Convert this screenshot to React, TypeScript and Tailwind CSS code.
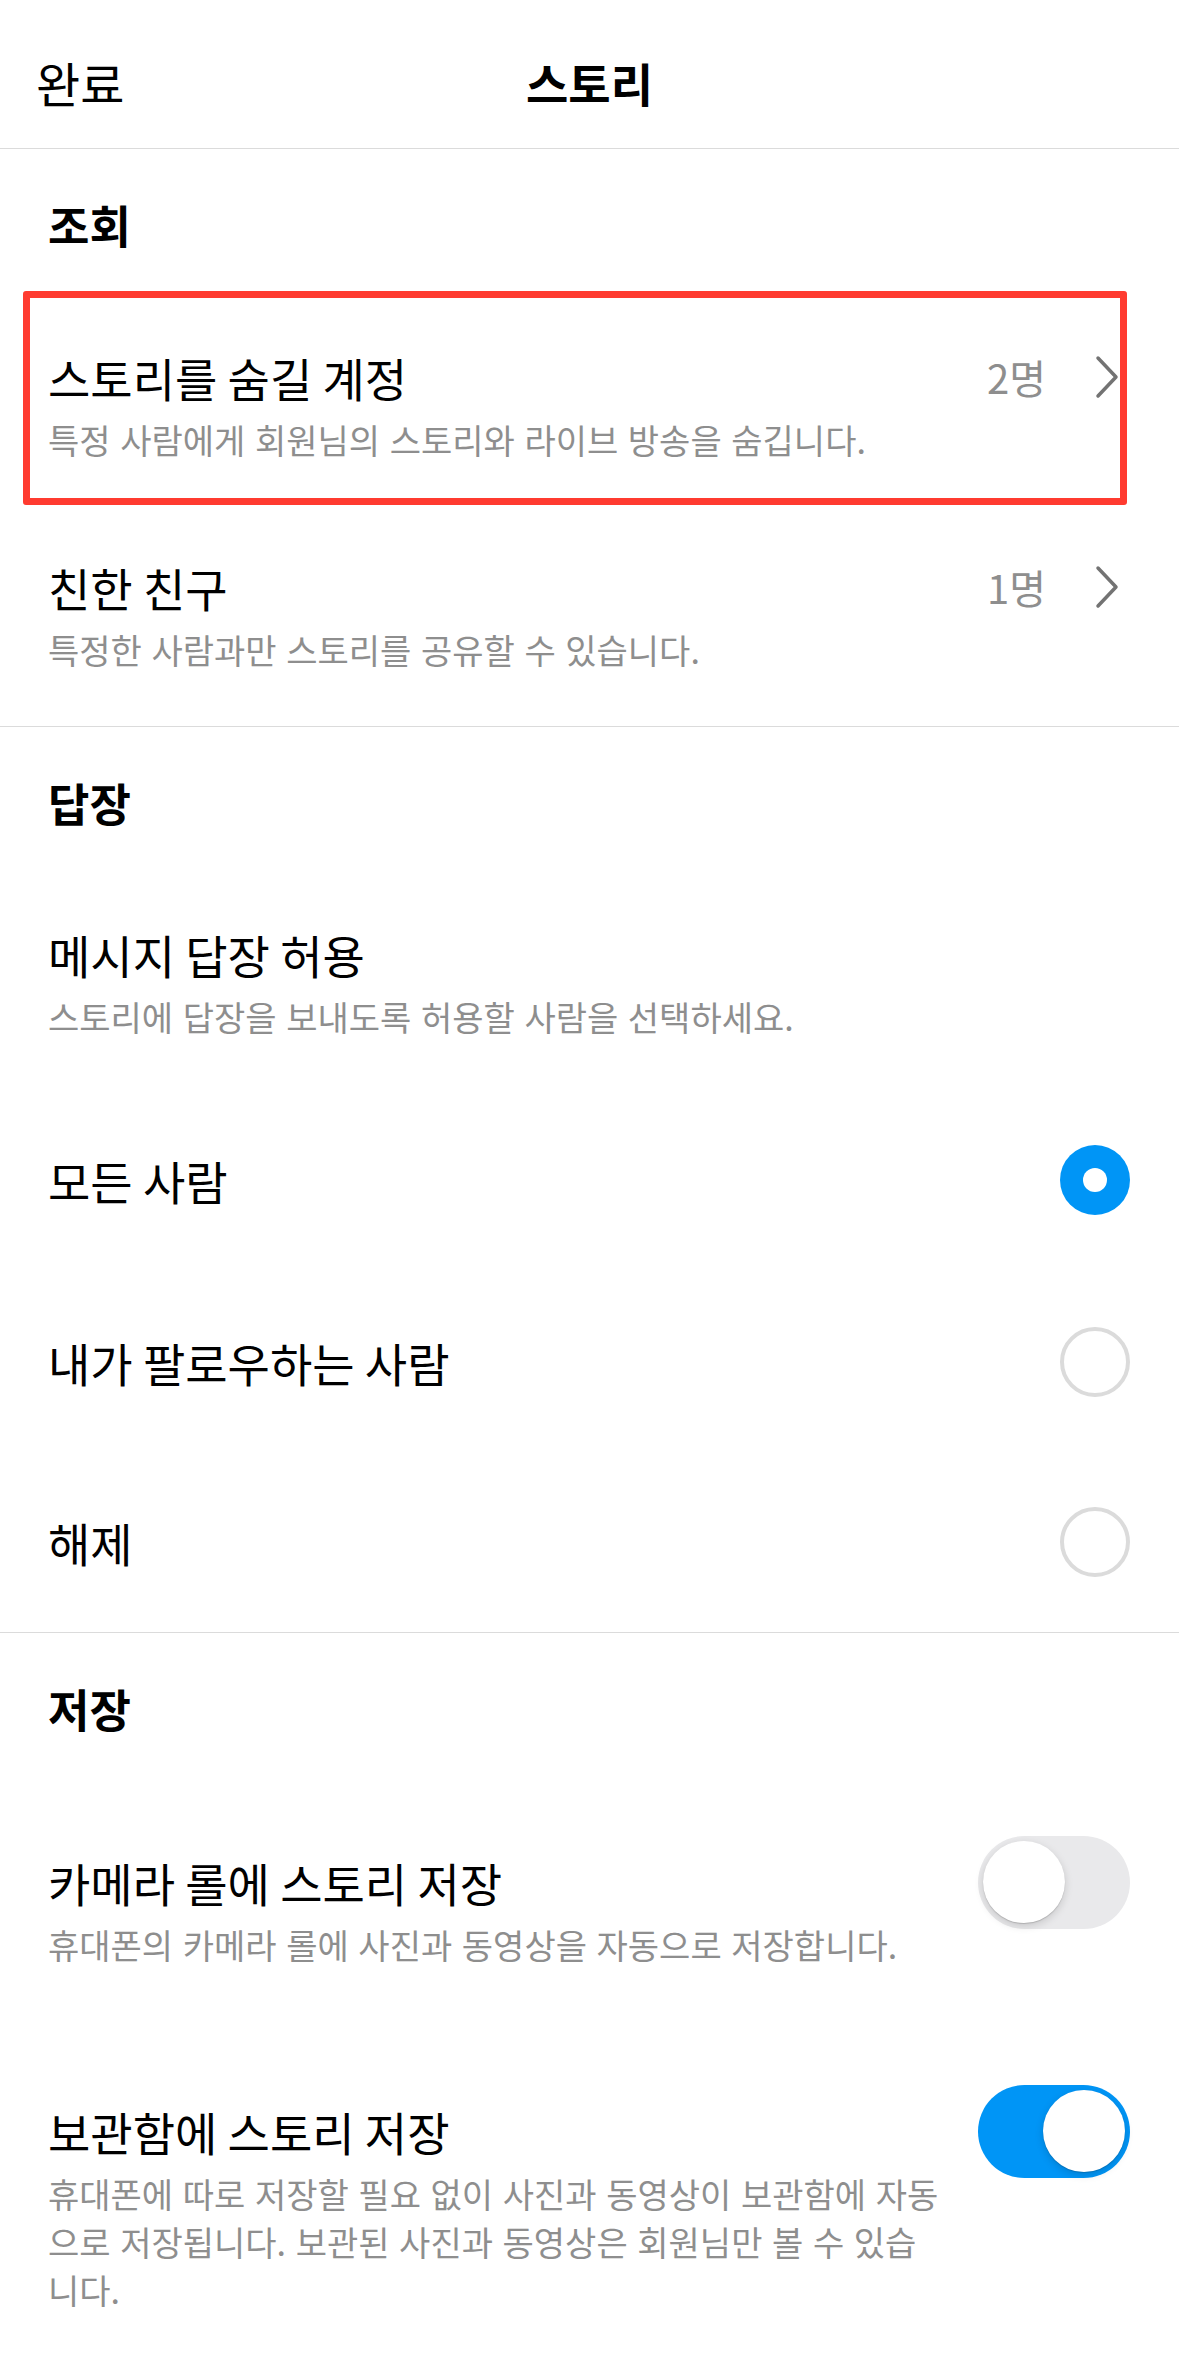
import React from "react";

const font = "font-['Noto_Sans_CJK_KR','Noto_Sans',sans-serif]";

function Chevron() {
  return (
    <svg width="26" height="44" viewBox="0 0 26 44" fill="none" className="shrink-0">
      <path d="M4 3 L22 22 L4 41" stroke="#737373" strokeWidth="3.5" strokeLinecap="round" strokeLinejoin="round" />
    </svg>
  );
}

function Radio({ checked }: { checked?: boolean }) {
  if (checked) {
    return (
      <div className="w-[70px] h-[70px] rounded-full bg-[#0095f6] flex items-center justify-center shrink-0">
        <div className="w-[24px] h-[24px] rounded-full bg-white" />
      </div>
    );
  }
  return <div className="w-[70px] h-[70px] rounded-full border-[4px] border-[#dbdbdb] shrink-0" />;
}

function Toggle({ on }: { on?: boolean }) {
  return (
    <div
      className={
        on
          ? "w-[152px] h-[93px] rounded-full bg-[#0095f6] flex items-center justify-end pr-[5px] shrink-0"
          : "w-[152px] h-[93px] rounded-full bg-[#e9e9eb] flex items-center justify-start pl-[5px] shrink-0"
      }
    >
      <div className="w-[82px] h-[82px] rounded-full bg-white shadow-[0_3px_8px_rgba(0,0,0,0.15),0_1px_1px_rgba(0,0,0,0.16)]" />
    </div>
  );
}

function SectionHeader({ label, border }: { label: string; border?: boolean }) {
  return (
    <div className={(border ? "border-t border-[#dbdbdb] " : "") + "h-[152px] flex items-center px-[48px]"}>
      <span className="text-[45px] font-bold text-black leading-[56px]">{label}</span>
    </div>
  );
}

function LinkRow({ title, desc, count }: { title: string; desc: string; count: string }) {
  return (
    <div className="h-[210px] flex flex-col justify-center pl-[48px] pr-[59px]">
      <div className="flex items-center justify-between h-[56px]">
        <span className="text-[46px] text-black leading-[56px] whitespace-nowrap">{title}</span>
        <div className="flex items-center gap-[48px]">
          <span className="text-[40px] text-[#8e8e8e] leading-[56px]">{count}</span>
          <Chevron />
        </div>
      </div>
      <div className="mt-[11px] text-[34px] leading-[48px] text-[#8e8e8e] whitespace-nowrap [word-spacing:2px]">{desc}</div>
    </div>
  );
}

function RadioRow({ label, checked, h }: { label: string; checked?: boolean; h: string }) {
  return (
    <div className={h + " flex items-center justify-between pl-[48px] pr-[49px]"}>
      <span className="text-[46px] text-black leading-[56px]">{label}</span>
      <Radio checked={checked} />
    </div>
  );
}

export default function App() {
  return (
    <div className={font + " relative w-[1179px] min-h-[2371px] bg-white text-black antialiased"}>
      {/* header */}
      <div className="h-[149px] border-b border-[#dbdbdb] grid grid-cols-3 items-center pt-[16px] px-[36px]">
        <span className="text-[48px] leading-[56px] text-black">완료</span>
        <span className="text-[46px] leading-[56px] font-bold text-center">스토리</span>
        <span />
      </div>

      {/* 조회 */}
      <SectionHeader label="조회" />
      <LinkRow title="스토리를 숨길 계정" count="2명" desc="특정 사람에게 회원님의 스토리와 라이브 방송을 숨깁니다." />
      <LinkRow title="친한 친구" count="1명" desc="특정한 사람과만 스토리를 공유할 수 있습니다." />
      <div className="h-[5px]" />

      {/* 답장 */}
      <SectionHeader label="답장" border />
      <div className="h-[210px] flex flex-col justify-center px-[48px]">
        <span className="text-[46px] leading-[56px]">메시지 답장 허용</span>
        <div className="mt-[11px] text-[34px] leading-[48px] text-[#8e8e8e] whitespace-nowrap [word-spacing:2px]">
          스토리에 답장을 보내도록 허용할 사람을 선택하세요.
        </div>
      </div>
      <RadioRow label="모든 사람" checked h="h-[184px]" />
      <RadioRow label="내가 팔로우하는 사람" h="h-[180px]" />
      <RadioRow label="해제" h="h-[180px]" />

      {/* 저장 */}
      <SectionHeader label="저장" border />
      <div className="pt-[70px] pb-[64px] pl-[48px] pr-[49px]">
        <div className="flex items-center justify-between h-[56px]">
          <span className="text-[46px] leading-[56px] whitespace-nowrap">카메라 롤에 스토리 저장</span>
          <Toggle />
        </div>
        <div className="mt-[11px] text-[34px] leading-[48px] text-[#8e8e8e] whitespace-nowrap [word-spacing:2px]">
          휴대폰의 카메라 롤에 사진과 동영상을 자동으로 저장합니다.
        </div>
      </div>
      <div className="pt-[70px] pb-[56px] pl-[48px] pr-[49px]">
        <div className="flex items-center justify-between h-[56px]">
          <span className="text-[46px] leading-[56px] whitespace-nowrap">보관함에 스토리 저장</span>
          <Toggle on />
        </div>
        <div className="mt-[11px] text-[34px] leading-[48px] text-[#8e8e8e] whitespace-nowrap [word-spacing:2px]">
          <div>휴대폰에 따로 저장할 필요 없이 사진과 동영상이 보관함에 자동</div>
          <div>으로 저장됩니다. 보관된 사진과 동영상은 회원님만 볼 수 있습</div>
          <div>니다.</div>
        </div>
      </div>

      {/* annotation box */}
      <div className="absolute left-[23px] top-[291px] w-[1104px] h-[214px] border-[7px] border-[#ff3b30] rounded-[3px] blur-[0.6px] pointer-events-none" />
    </div>
  );
}
